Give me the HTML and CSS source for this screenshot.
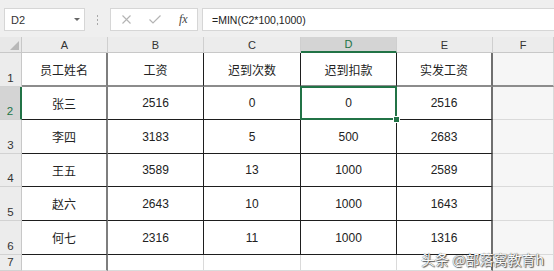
FILE: index.html
```html
<!DOCTYPE html>
<html lang="zh-CN">
<head>
    <meta charset="UTF-8">
    <meta name="viewport" content="width=device-width, initial-scale=1.0">
    <title>迟到扣款</title>
    <link rel="stylesheet" href="styles.css">
</head>
<body>

    <div class="toolbar">
        <div class="namebox">
            <span>D2</span>
            <span class="caret"></span>
        </div>
        <div class="grip"><i></i><i></i><i></i></div>
        <div class="fx-buttons">
            <svg class="btn-x" width="9" height="9" viewBox="0 0 9 9">
                <path d="M0.5 0.5 L8.5 8.5 M8.5 0.5 L0.5 8.5" stroke="#b4b4b4" stroke-width="1.1" fill="none"/>
            </svg>
            <svg class="btn-ok" width="12" height="9" viewBox="0 0 12 9">
                <path d="M0.5 4.5 L4 8 L11.5 0.5" stroke="#b4b4b4" stroke-width="1.2" fill="none"/>
            </svg>
            <span class="btn-fx">fx</span>
        </div>
        <div class="formula">=MIN(C2*100,1000)</div>
    </div>

    <div class="sheet">
        <!-- header row -->
        <div class="corner"><span class="tri"></span></div>
        <div class="colhead">A</div>
        <div class="colhead">B</div>
        <div class="colhead">C</div>
        <div class="colhead on">D</div>
        <div class="colhead">E</div>
        <div class="colhead">F</div>

        <!-- row 1 -->
        <div class="rowhead">1</div>
        <div class="cell data row-1 col-a">员工姓名</div>
        <div class="cell data row-1">工资</div>
        <div class="cell data row-1">迟到次数</div>
        <div class="cell data row-1">迟到扣款</div>
        <div class="cell data row-1 col-e">实发工资</div>
        <div class="cell row-1 col-f"></div>

        <!-- row 2 -->
        <div class="rowhead on">2</div>
        <div class="cell data col-a">张三</div>
        <div class="cell data">2516</div>
        <div class="cell data">0</div>
        <div class="cell data sel">0<span class="handle"></span></div>
        <div class="cell data col-e">2516</div>
        <div class="cell col-f"></div>

        <!-- row 3 -->
        <div class="rowhead">3</div>
        <div class="cell data col-a">李四</div>
        <div class="cell data">3183</div>
        <div class="cell data">5</div>
        <div class="cell data">500</div>
        <div class="cell data col-e">2683</div>
        <div class="cell col-f"></div>

        <!-- row 4 -->
        <div class="rowhead">4</div>
        <div class="cell data col-a">王五</div>
        <div class="cell data">3589</div>
        <div class="cell data">13</div>
        <div class="cell data">1000</div>
        <div class="cell data col-e">2589</div>
        <div class="cell col-f"></div>

        <!-- row 5 -->
        <div class="rowhead">5</div>
        <div class="cell data col-a">赵六</div>
        <div class="cell data">2643</div>
        <div class="cell data">10</div>
        <div class="cell data">1000</div>
        <div class="cell data col-e">1643</div>
        <div class="cell col-f"></div>

        <!-- row 6 -->
        <div class="rowhead">6</div>
        <div class="cell data col-a">何七</div>
        <div class="cell data">2316</div>
        <div class="cell data">11</div>
        <div class="cell data">1000</div>
        <div class="cell data col-e">1316</div>
        <div class="cell col-f"></div>

        <!-- row 7 -->
        <div class="rowhead">7</div>
        <div class="cell col-a"></div>
        <div class="cell"></div>
        <div class="cell"></div>
        <div class="cell"></div>
        <div class="cell col-e"></div>
        <div class="cell col-f"></div>
    </div>

    <div class="watermark">头条 @部落窝教育h</div>

</body>
</html>
```

FILE: styles.css
```css
body {
    margin: 0;
    width: 554px;
    height: 271px;
    overflow: hidden;
    position: relative;
    background: #fff;
    font-family: "Liberation Sans", "Noto Sans CJK SC", sans-serif;
    color: #222;
}

/* formula bar */
.toolbar {
    display: flex;
    height: 23px;
    padding: 8px 0 6px 4px;
    background: #efefef;
}

.namebox {
    width: 81px;
    box-sizing: border-box;
    display: flex;
    align-items: center;
    justify-content: space-between;
    padding: 0 4px 0 6px;
    background: #fff;
    border: 1px solid #d6d6d6;
    font-size: 11px;
    color: #333;
}

.namebox .caret {
    width: 0;
    height: 0;
    border-left: 3px solid transparent;
    border-right: 3px solid transparent;
    border-top: 3px solid #666;
}

.grip {
    width: 25px;
    display: flex;
    flex-direction: column;
    align-items: center;
    justify-content: center;
    gap: 2px;
}

.grip i {
    width: 1px;
    height: 2px;
    background: #a8a8a8;
}

.fx-buttons {
    width: 88px;
    box-sizing: border-box;
    display: flex;
    align-items: center;
    padding-left: 11px;
    background: #fff;
    border: 1px solid #d6d6d6;
}

.btn-ok {
    margin-left: 18px;
}

.btn-fx {
    margin-left: 18px;
    font-family: "Liberation Serif", serif;
    font-style: italic;
    font-size: 12px;
    color: #444;
}

.formula {
    flex: 1;
    margin-left: 4px;
    display: flex;
    align-items: center;
    padding-left: 9px;
    background: #fff;
    border: 1px solid #d6d6d6;
    border-right: none;
    font-size: 10.5px;
    color: #222;
}

/* grid */
.sheet {
    display: grid;
    grid-template-columns: 22px 86px 96px 97px 96px 96px 1fr;
    grid-template-rows: 16px 34px 33px 34px 33px 34px 34px 1fr;
    height: 234px;
}

.sheet > div {
    box-sizing: border-box;
}

.corner {
    display: flex;
    justify-content: flex-end;
    align-items: flex-end;
    padding: 0 2px 2px 0;
    background: #e8e8e8;
    border-right: 1px solid #c8c8c8;
    border-bottom: 1px solid #c8c8c8;
}

.corner .tri {
    width: 0;
    height: 0;
    border-left: 9px solid transparent;
    border-bottom: 9px solid #b8b8b8;
}

.colhead {
    display: flex;
    align-items: center;
    justify-content: center;
    background: #ececec;
    border-right: 1px solid #cfcfcf;
    border-bottom: 1px solid #c8c8c8;
    font-size: 11px;
    color: #333;
}

.colhead.on {
    background: #d4d4d4;
    color: #217346;
    border-bottom: 2px solid #217346;
}

.rowhead {
    display: flex;
    align-items: flex-end;
    justify-content: center;
    padding-bottom: 2px;
    background: #ececec;
    border-right: 1px solid #c8c8c8;
    border-bottom: 1px solid #d2d2d2;
    font-size: 11.5px;
    color: #333;
}

.rowhead.on {
    background: #d4d4d4;
    color: #217346;
    border-right: 2px solid #217346;
}

.cell {
    display: flex;
    align-items: center;
    justify-content: center;
    border-right: 1px solid #dadada;
    border-bottom: 1px solid #dadada;
    font-size: 12px;
}

.cell.data {
    border-color: #1e1e1e;
}

.cell.col-a {
    border-right: 2px solid #7e7e7e;
}

.cell.row-1 {
    border-bottom: 2px solid #8c8c8c;
}

.cell.col-e {
    border-right: 2px solid #707070;
}

.cell.col-f {
    background: #f6f6f6;
}

.cell.sel {
    position: relative;
}

.cell.sel::after {
    content: "";
    position: absolute;
    left: -1px;
    top: -1px;
    right: -1px;
    bottom: -1px;
    border: 2px solid #217346;
}

.cell.sel .handle {
    position: absolute;
    right: -4px;
    bottom: -4px;
    width: 5px;
    height: 5px;
    background: #217346;
    border: 1px solid #fff;
    z-index: 1;
}

.watermark {
    position: absolute;
    left: 421px;
    top: 249px;
    font-family: "Noto Sans CJK SC", sans-serif;
    font-size: 14px;
    white-space: nowrap;
    color: #fafafa;
    text-shadow: 0 0 1px #222, 1px 1px 1px #555;
}
```
